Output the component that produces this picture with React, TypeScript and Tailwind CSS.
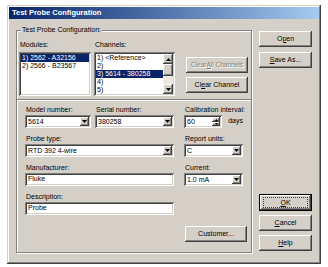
import React from 'react'

const raised =
  'shadow-[inset_-1px_-1px_0_#404040,inset_1px_1px_0_#ffffff,inset_-2px_-2px_0_#808080,inset_2px_2px_0_#d4d0c8]'
const sunken =
  'shadow-[inset_1px_1px_0_#808080,inset_-1px_-1px_0_#ffffff,inset_2px_2px_0_#404040,inset_-2px_-2px_0_#d4d0c8]'

const Down = ({ w = 5, h = 3 }: { w?: number; h?: number }) => (
  <svg width={w} height={h} viewBox="0 0 5 3">
    <path d="M0 0h5L2.5 3z" fill="#000" />
  </svg>
)
const Up = ({ w = 5, h = 3 }: { w?: number; h?: number }) => (
  <svg width={w} height={h} viewBox="0 0 5 3">
    <path d="M0 3h5L2.5 0z" fill="#000" />
  </svg>
)

function Btn({
  children,
  className = '',
  disabled,
}: {
  children: React.ReactNode
  className?: string
  disabled?: boolean
}) {
  return (
    <div
      className={`${raised} bg-[#d4d0c8] h-[16px] flex items-center justify-center whitespace-nowrap ${
        disabled ? 'text-[#808080] [text-shadow:1px_1px_0_#ffffff]' : 'text-black'
      } ${className}`}
    >
      {children}
    </div>
  )
}

function Label({ children }: { children: React.ReactNode }) {
  return <div className="h-[8px] leading-[8px] pl-[1px] whitespace-nowrap">{children}</div>
}

function Combo({ value, className = '' }: { value: string; className?: string }) {
  return (
    <div className={`${sunken} bg-white h-[13px] p-[2px] flex items-center mt-[1px] ${className}`}>
      <span className="flex-1 pl-[1px] leading-[9px]">{value}</span>
      <div className={`${raised} bg-[#d4d0c8] w-[9px] h-[9px] flex items-center justify-center`}>
        <Down />
      </div>
    </div>
  )
}

function Field({ value }: { value: string }) {
  return (
    <div className={`${sunken} bg-white h-[13px] px-[3px] flex items-center mt-[1px]`}>{value}</div>
  )
}

export default function App() {
  return (
    <div
      className="w-[328px] h-[267px] bg-white pl-[7px] pt-[5px] text-[7px] text-black"
      style={{ fontFamily: '"Liberation Sans", Arial, sans-serif' }}
    >
      <div className="w-[314px] h-[259px] bg-[#d4d0c8] p-[2px] shadow-[inset_-1px_-1px_0_#404040,inset_1px_1px_0_#d4d0c8,inset_-2px_-2px_0_#808080,inset_2px_2px_0_#ffffff]">
        {/* title bar */}
        <div className="h-[12px] bg-linear-to-r from-[#0a246a] to-[#a6caf0] flex items-center pl-[3px] text-white font-bold text-[7.5px]">
          Test Probe Configuration
        </div>

        <div className="flex">
          {/* group box */}
          <div className="relative ml-[7px] mt-[11px] w-[236px] h-[223px] border border-[#808080] shadow-[1px_1px_0_#ffffff,inset_1px_1px_0_#ffffff] pt-[10px]">
            <div className="absolute -top-[5px] left-[4px] px-[1px] bg-[#d4d0c8] leading-[8px]">
              Test Probe Configuration:
            </div>

            <div className="flex items-start pl-[2px]">
              <div className="w-[72px]">
                <Label>Modules:</Label>
                <div className={`${sunken} bg-white h-[44px] p-[2px] mt-[3px]`}>
                  <div className="h-[8px] leading-[8px] pl-[1px] bg-[#0a246a] text-white">1) 2562 - A32156</div>
                  <div className="h-[8px] leading-[8px] pl-[1px]">2) 2566 - B23567</div>
                </div>
              </div>

              <div className="w-[81px] ml-[3px]">
                <Label>Channels:</Label>
                <div className={`${sunken} bg-white h-[44px] p-[2px] mt-[3px] flex`}>
                  <div className="flex-1 overflow-hidden">
                    <div className="h-[8px] leading-[8px] pl-[1px]">1) &lt;Reference&gt;</div>
                    <div className="h-[8px] leading-[8px] pl-[1px]">2)</div>
                    <div className="h-[8px] leading-[8px] pl-[1px] bg-[#0a246a] text-white">3) 5614 - 380258</div>
                    <div className="h-[8px] leading-[8px] pl-[1px]">4)</div>
                    <div className="h-[8px] leading-[8px] pl-[1px]">5)</div>
                  </div>
                  <div className="w-[10px] flex flex-col bg-[#ece9e3]">
                    <div className={`${raised} bg-[#d4d0c8] h-[10px] flex items-center justify-center`}>
                      <Up />
                    </div>
                    <div className={`${raised} bg-[#d4d0c8] h-[12px]`} />
                    <div className="flex-1" />
                    <div className={`${raised} bg-[#d4d0c8] h-[10px] flex items-center justify-center`}>
                      <Down />
                    </div>
                  </div>
                </div>
              </div>

              <div className="w-[62px] ml-[11px] pt-[16px] flex flex-col gap-[4px]">
                <Btn disabled className="text-[6.5px]">
                  Clear <u>A</u>ll Channels
                </Btn>
                <Btn>
                  Cl<u>e</u>ar Channel
                </Btn>
              </div>
            </div>

            {/* separator */}
            <div className="mt-[3px] h-[2px] border-t border-t-[#808080] border-b border-b-white" />

            <div className="flex mt-[5px]">
              <div className="w-[149px] ml-[8px] flex flex-col gap-[7px]">
                <div className="flex gap-[4px]">
                  <div className="w-[66px]">
                    <Label>Model number:</Label>
                    <Combo value="5614" />
                  </div>
                  <div className="w-[79px]">
                    <Label>Serial number:</Label>
                    <Combo value="380258" />
                  </div>
                </div>
                <div>
                  <Label>Probe type:</Label>
                  <Combo value="RTD 392 4-wire" />
                </div>
                <div>
                  <Label>Manufacturer:</Label>
                  <Field value="Fluke" />
                </div>
                <div>
                  <Label>Description:</Label>
                  <Field value="Probe" />
                </div>
              </div>

              <div className="w-[59px] ml-[10px] flex flex-col">
                <div>
                  <Label>Calibration interval:</Label>
                  <div className="flex items-center mt-[1px]">
                    <div className={`${sunken} bg-white h-[13px] w-[46px] p-[2px] flex items-center`}>
                      <span className="flex-1 pl-[1px] leading-[9px]">60</span>
                      <div className="flex flex-col w-[8px] h-[9px]">
                        <div className={`${raised} bg-[#d4d0c8] h-[5px] flex items-center justify-center`}>
                          <Up w={3} h={2} />
                        </div>
                        <div className={`${raised} bg-[#d4d0c8] h-[4px] flex items-center justify-center`}>
                          <Down w={3} h={2} />
                        </div>
                      </div>
                    </div>
                    <span className="ml-[6px]">days</span>
                  </div>
                </div>
                <div className="mt-[7px]">
                  <Label>Report units:</Label>
                  <Combo value="C" />
                </div>
                <div className="mt-[7px]">
                  <Label>Current:</Label>
                  <Combo value="1.0 mA" />
                </div>
                <Btn className="w-[62px] ml-[1px] mt-[40px]">Customer...</Btn>
              </div>
            </div>
          </div>

          {/* right buttons */}
          <div className="ml-[7px] mt-[12px] w-[53px] flex flex-col">
            <Btn>
              O<u>p</u>en
            </Btn>
            <Btn className="mt-[5px]">
              <u>S</u>ave As...
            </Btn>
            <div className="mt-[126px] h-[17px] border border-black">
              <div className={`${raised} relative bg-[#d4d0c8] h-full flex items-center justify-center leading-none`}>
                <span>
                  <u>O</u>K
                </span>
                <div className="absolute inset-x-[3px] inset-y-[2px] border border-dotted border-[#404040]" />
              </div>
            </div>
            <Btn className="mt-[4px]">
              <u>C</u>ancel
            </Btn>
            <Btn className="mt-[4px]">
              <u>H</u>elp
            </Btn>
          </div>
        </div>
      </div>
    </div>
  )
}
